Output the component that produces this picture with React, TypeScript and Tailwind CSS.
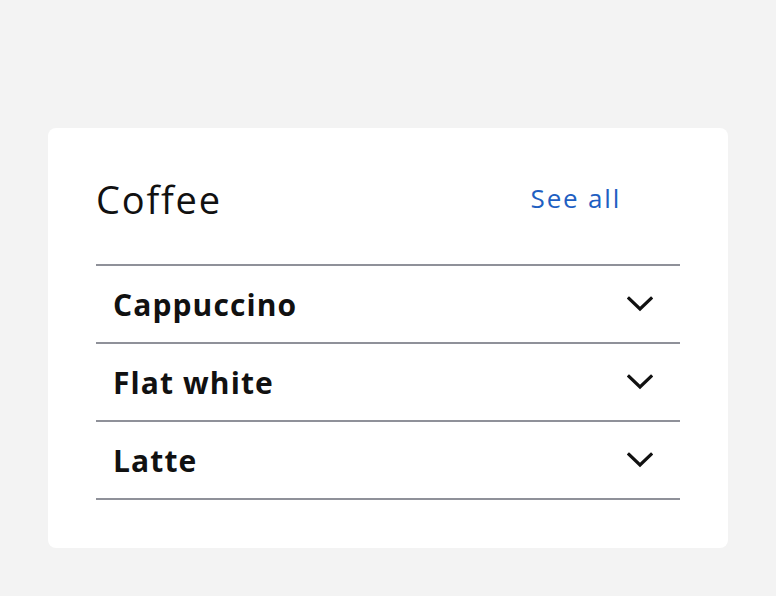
const ITEMS = ["Cappuccino", "Flat white", "Latte"];

function Chevron() {
  return (
    <svg width="26" height="16" viewBox="0 0 26 16" fill="none" className="shrink-0">
      <path d="M2 2.5 L13 13 L24 2.5" stroke="#111111" strokeWidth="3.2" strokeLinecap="square" strokeLinejoin="miter" />
    </svg>
  );
}

export default function App() {
  return (
    <div className="min-h-[596px] w-full bg-[#f3f3f3] px-12 pt-32 font-['Open_Sans',sans-serif]">
      <div className="rounded-lg bg-white px-12 pb-12 pt-12">
        <div className="mb-[42px] flex items-start justify-between">
          <h2 className="text-[38px] leading-[46px] font-normal tracking-[1.8px] text-[#111111]">Coffee</h2>
          <a href="#" className="mr-[59px] text-[26px] leading-[44px] tracking-[1.8px] text-[#1f5fc2]">
            See all
          </a>
        </div>
        <div className="border-t-2 border-[#8f9199]">
          {ITEMS.map((item) => (
            <div
              key={item}
              className="flex h-[78px] items-center justify-between border-b-2 border-[#8f9199] pl-[17px] pr-[27px]"
            >
              <span className="text-[30px] font-bold tracking-[1.1px] text-[#111111]">{item}</span>
              <Chevron />
            </div>
          ))}
        </div>
      </div>
    </div>
  );
}
